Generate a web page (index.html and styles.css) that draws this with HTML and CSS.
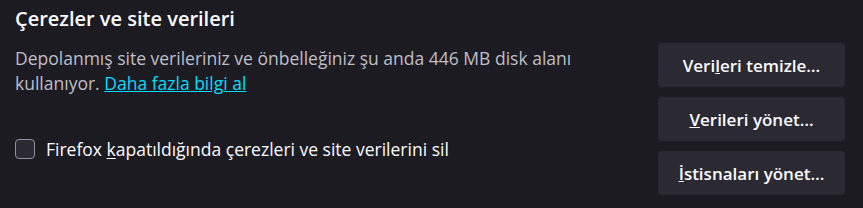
FILE: index.html
```html
<!DOCTYPE html>
<html lang="tr">
<head>
    <meta charset="UTF-8">
    <title>Çerezler ve site verileri</title>
    <link rel="stylesheet" href="styles.css">
</head>
<body>
    <section class="cookies">
        <h2 class="title">Çerezler ve site verileri</h2>
        <div class="row">
            <div class="info">
                <p class="desc">Depolanmış site verileriniz ve önbelleğiniz şu anda 446 MB disk alanı kullanıyor. <a href="#" class="link">Daha fazla bilgi al</a></p>
                <label class="check">
                    <span class="box"></span>
                    <span>Firefox <u>k</u>apatıldığında çerezleri ve site verilerini sil</span>
                </label>
            </div>
            <div class="buttons">
                <button class="btn">Veri<u>l</u>eri temizle…</button>
                <button class="btn"><u>V</u>erileri yönet…</button>
                <button class="btn"><u>İ</u>stisnaları yönet…</button>
            </div>
        </div>
    </section>
</body>
</html>
```

FILE: styles.css
```css
body {
    margin: 0;
    background: #1c1b22;
    color: #fbfbfe;
    font-family: "Open Sans", "Noto Sans", sans-serif;
}

.cookies {
    padding: 6px 18px 0 15px;
}

.title {
    margin: 0;
    font-size: 20px;
    font-weight: 600;
    line-height: 26px;
}

.row {
    display: flex;
    justify-content: space-between;
    margin-top: 11px;
}

.desc {
    margin: 3px 0 0;
    width: 590px;
    font-size: 17.5px;
    line-height: 25px;
    color: #bfbfc9;
}

.link {
    color: #00ddff;
}

.check {
    display: flex;
    align-items: center;
    gap: 11px;
    margin-top: 41px;
    font-size: 17.5px;
}

.check u {
    text-underline-offset: 2px;
}

.box {
    width: 18px;
    height: 18px;
    border: 1px solid #8f8f9d;
    border-radius: 4px;
    background: #2b2a33;
}

.buttons {
    display: flex;
    flex-direction: column;
    align-items: flex-end;
    gap: 10px;
}

.btn {
    min-width: 187px;
    height: 44px;
    padding: 0 14px;
    border: none;
    border-radius: 4px;
    background: #2b2a33;
    color: #fbfbfe;
    font-family: inherit;
    font-size: 17px;
    font-weight: 600;
}
```
